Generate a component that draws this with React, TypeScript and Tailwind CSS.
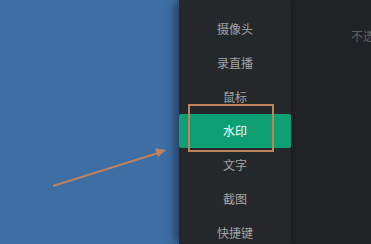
import React from 'react';

const items = ['摄像头', '录直播', '鼠标', '水印', '文字', '截图', '快捷键'];

export default function App() {
  return (
    <div
      className="relative flex h-[244px] w-[371px] overflow-hidden bg-[#212225]"
      style={{ fontFamily: '"Noto Sans CJK SC", "Noto Sans", sans-serif' }}
    >
      {/* desktop side */}
      <div className="w-[179px] shrink-0 bg-[#3d6fa5]" />

      {/* settings menu */}
      <div className="relative z-10 flex w-[112px] shrink-0 flex-col bg-[#25282b] pt-[12px] shadow-[-4px_0_9px_rgba(0,0,0,0.45)]">
        {items.map((label) => (
          <div
            key={label}
            className={
              label === '水印'
                ? 'flex h-[34px] shrink-0 items-center justify-center rounded-[2px] bg-[#0e9f74] text-[12px] text-white'
                : 'flex h-[34px] shrink-0 items-center justify-center text-[12px] text-[#a3a3a3]'
            }
          >
            {label}
          </div>
        ))}
      </div>

      {/* content panel */}
      <div className="flex-1 pl-[60px] pt-[22px]">
        <span className="whitespace-nowrap text-[12px] text-[#5f6063]">不透明度</span>
      </div>

      {/* annotation overlay */}
      <div className="absolute left-[188px] top-[104px] z-20 h-[48px] w-[86px] border-2 border-[#c0815d]" />
      <svg className="absolute left-0 top-0 z-20" width="371" height="244" viewBox="0 0 371 244">
        <line x1="53" y1="186" x2="158" y2="153" stroke="#c0815d" strokeWidth="2" />
        <polygon points="166,150 155,148.5 158,157" fill="#c0815d" />
      </svg>
    </div>
  );
}
